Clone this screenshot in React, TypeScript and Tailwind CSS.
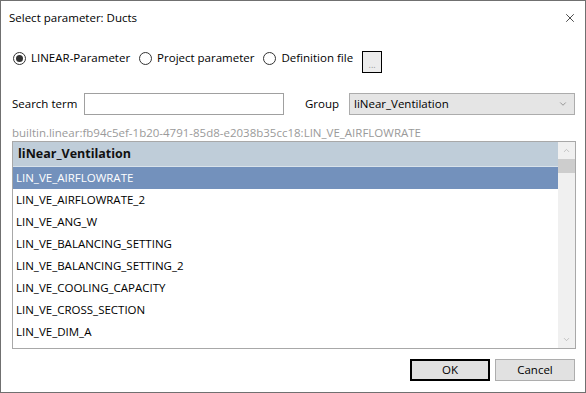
import { X, ChevronDown, ChevronUp } from 'lucide-react';

const rows = [
  'LIN_VE_AIRFLOWRATE',
  'LIN_VE_AIRFLOWRATE_2',
  'LIN_VE_ANG_W',
  'LIN_VE_BALANCING_SETTING',
  'LIN_VE_BALANCING_SETTING_2',
  'LIN_VE_COOLING_CAPACITY',
  'LIN_VE_CROSS_SECTION',
  'LIN_VE_DIM_A',
];

function Radio({ label, checked }: { label: string; checked?: boolean }) {
  return (
    <label className="flex h-[16px] items-center gap-[5px]">
      <span className="flex h-[13px] w-[13px] items-center justify-center rounded-full border border-[#333]">
        {checked && <span className="h-[7px] w-[7px] rounded-full bg-[#333]" />}
      </span>
      <span>{label}</span>
    </label>
  );
}

export default function App() {
  return (
    <div className="flex h-[393px] w-[586px] flex-col border border-[#707070] bg-white font-['Open_Sans',sans-serif] text-[11.5px] text-black">
      <div className="flex h-[34px] shrink-0 items-center justify-between pl-[8px] pr-[8px]">
        <span>Select parameter: Ducts</span>
        <X size={14} strokeWidth={1.2} />
      </div>

      <div className="mt-[15px] flex h-[23px] items-start gap-[9px] pl-[12px]">
        <Radio label="LINEAR-Parameter" checked />
        <Radio label="Project parameter" />
        <Radio label="Definition file" />
        <button className="mt-[1px] flex h-[22px] w-[20px] items-end justify-center border border-black bg-[#ececec] pb-[3px] text-[9px] leading-none text-[#999]">
          ...
        </button>
      </div>

      <div className="mt-[20px] flex h-[22px] items-center pl-[11px]">
        <span className="w-[72px]">Search term</span>
        <input className="h-[22px] w-[200px] border border-[#a0a0a0] bg-white outline-none" />
        <span className="ml-[21px] w-[44px]">Group</span>
        <div className="flex h-[22px] w-[226px] items-center justify-between border border-[#acacac] bg-[#e5e5e5] pl-[4px] pr-[6px]">
          <span>liNear_Ventilation</span>
          <ChevronDown size={10} strokeWidth={1.5} className="text-[#666]" />
        </div>
      </div>

      <div className="mt-[10px] h-[16px] pl-[11px] leading-[16px] text-[#9a9a9a]">
        builtin.linear:fb94c5ef-1b20-4791-85d8-e2038b35cc18:LIN_VE_AIRFLOWRATE
      </div>

      <div className="ml-[11px] flex h-[208px] w-[564px] border border-[#a8a8a8]">
        <div className="flex-1">
          <div className="flex h-[25px] items-center border-b border-[#d8e2ea] bg-[#bfcdd9] pl-[5px] text-[12.5px] font-bold text-[#111]">
            liNear_Ventilation
          </div>
          {rows.map((r, i) => (
            <div
              key={r}
              className={`flex h-[22px] items-center pl-[3px] ${i === 0 ? 'bg-[#7391bc] text-white' : ''}`}
            >
              {r}
            </div>
          ))}
        </div>
        <div className="flex w-[17px] flex-col items-center bg-[#f0f0f0]">
          <div className="flex h-[17px] items-center justify-center">
            <ChevronUp size={9} strokeWidth={1.5} className="text-[#a0a0a0]" />
          </div>
          <div className="h-[14px] w-[17px] bg-[#cdcdcd]" />
          <div className="flex-1" />
          <div className="flex h-[17px] items-center justify-center">
            <ChevronDown size={9} strokeWidth={1.5} className="text-[#a0a0a0]" />
          </div>
        </div>
      </div>

      <div className="mt-[10px] flex justify-end gap-[5px] pr-[10px]">
        <button className="h-[22px] w-[80px] border-2 border-black bg-[#e1e1e1]">OK</button>
        <button className="h-[22px] w-[80px] border border-[#adadad] bg-[#e1e1e1]">Cancel</button>
      </div>
    </div>
  );
}
